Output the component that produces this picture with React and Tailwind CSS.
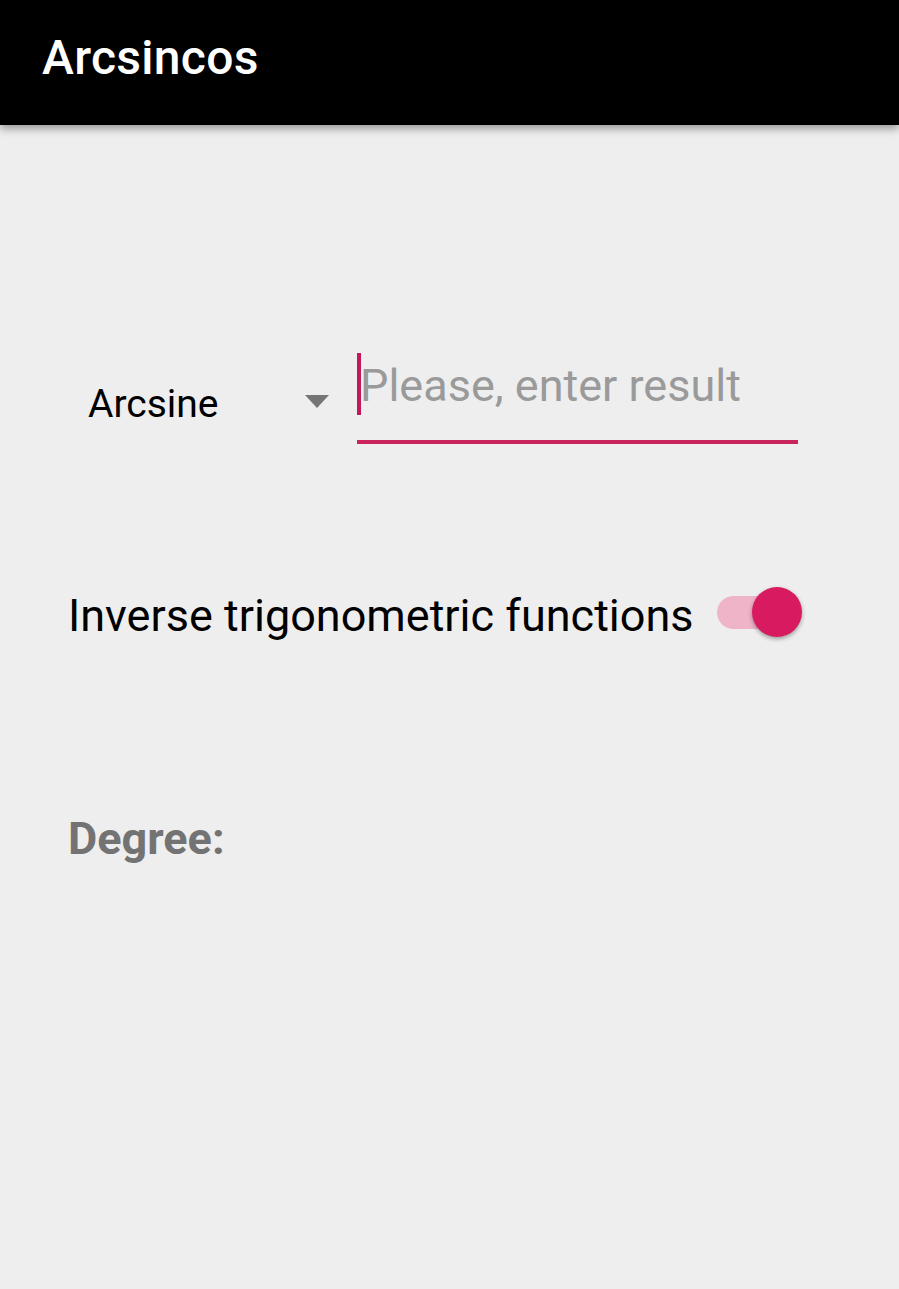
export default function App() {
  return (
    <div className="min-h-[1289px] bg-[#eeeeee] font-['Roboto',sans-serif]">
      <header className="relative h-[125px] bg-black pl-[42px] pt-[34px] shadow-[0_4px_8px_rgba(0,0,0,0.35)]">
        <h1 className="text-[48px] font-medium leading-none tracking-[0.3px] text-white">Arcsincos</h1>
      </header>

      <main className="pl-[68px]">
        <div className="mt-[228px] flex items-start">
          <div className="ml-[20px] flex w-[269px] items-start justify-between pr-[28px]">
            <span className="mt-[32px] text-[39px] leading-none text-black">Arcsine</span>
            <svg className="mt-[42px]" width="24" height="13" viewBox="0 0 24 13">
              <path d="M0 0h24L12 13z" fill="#757575" />
            </svg>
          </div>
          <div className="relative w-[441px]">
            <span className="absolute left-0 top-0 h-[62px] w-[4px] bg-[#c2185b]" />
            <p className="pl-[3px] pt-[10px] text-[45px] leading-none text-[#9a9a9a]">Please, enter result</p>
            <div className="mt-[32px] h-[4px] bg-[#c9245e]" />
          </div>
        </div>

        <div className="mt-[143px] flex w-[734px] items-start justify-between">
          <span className="mt-[6px] text-[45px] leading-none text-black">Inverse trigonometric functions</span>
          <div className="relative h-[52px] w-[85px]">
            <div className="absolute left-0 top-[9px] h-[33px] w-[73px] rounded-full bg-[#f0b4c8]" />
            <div className="absolute left-[35px] top-0 h-[50px] w-[50px] rounded-full bg-[#d81b60] shadow-[0_2px_4px_rgba(0,0,0,0.35)]" />
          </div>
        </div>

        <p className="mt-[177px] text-[45px] font-bold leading-none text-[#737373]">Degree:</p>
      </main>
    </div>
  );
}
